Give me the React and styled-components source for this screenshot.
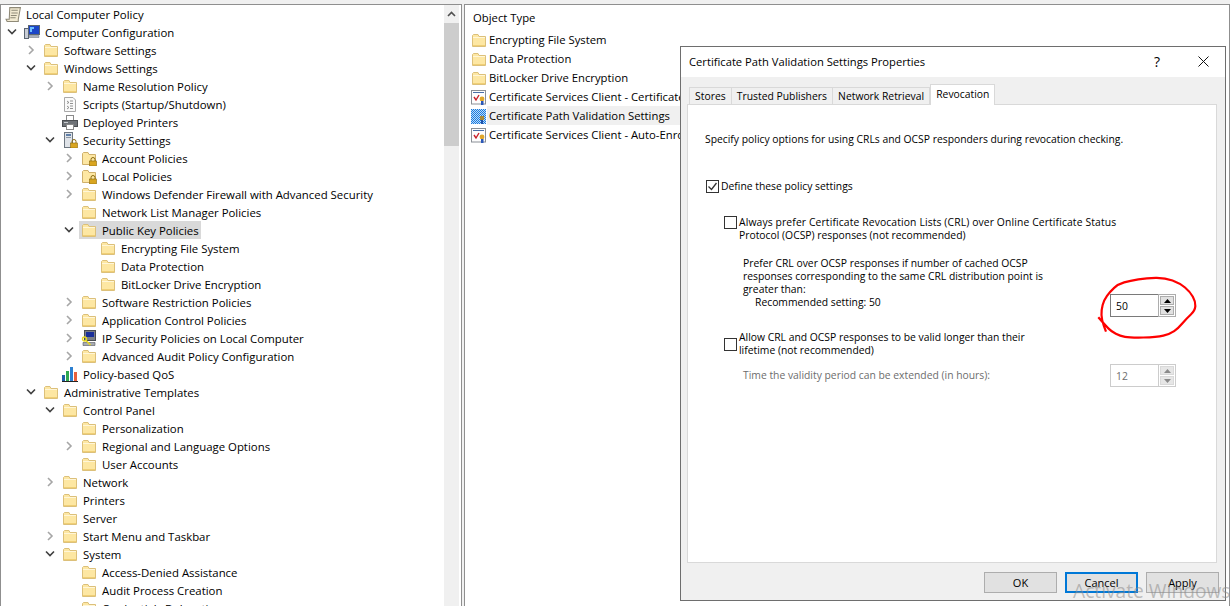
import React from 'react';
import styled, { createGlobalStyle } from 'styled-components';

const GlobalStyle = createGlobalStyle`
  html, body {
    margin: 0;
    padding: 0;
    background: #fff;
  }
  body {
    font-family: "Open Sans", "Noto Sans", "Liberation Sans", sans-serif;
    font-size: 11.3px;
    color: #000;
  }
`;

const Screen = styled.div`
  position: relative;
  width: 1230px;
  height: 606px;
  overflow: hidden;
  background: #f0f0f0;
  padding-top: 4px;
  box-sizing: border-box;
  display: flex;
  gap: 2px;
`;

const TreePane = styled.div`
  width: 462px;
  flex: none;
  box-sizing: border-box;
  height: 610px;
  display: flex;
  background: #fff;
  border: 1px solid #8f8f8f;
`;

const Tree = styled.div`
  flex: 1;
  overflow: hidden;
  font-size: 11.4px;
`;

const TreeRow = styled.div`
  height: 18px;
  display: flex;
  align-items: center;
  padding-left: ${(p) => (p.$level === 0 ? 2 : 3 + (p.$level - 1) * 19)}px;
`;

const ArrowSlot = styled.span`
  width: 16px;
  height: 18px;
  flex: none;
  display: flex;
  align-items: center;
  justify-content: center;
`;

const TreeItem = styled.span`
  display: flex;
  align-items: center;
  height: 18px;
  gap: ${(p) => (p.$bare ? 4 : 5)}px;
  padding: 0 2px;
  margin-left: ${(p) => (p.$bare ? 0 : 2)}px;
  white-space: nowrap;
  background: ${(p) => (p.$selected ? '#d9d9d9' : 'transparent')};
`;

const Scrollbar = styled.div`
  width: 15px;
  flex: none;
  margin-right: 2px;
  display: flex;
  flex-direction: column;
  background: #f0f0f0;
`;

const ScrollUp = styled.div`
  height: 18px;
  display: flex;
  align-items: center;
  justify-content: center;
`;

const ScrollThumb = styled.div`
  height: 123px;
  background: #cdcdcd;
`;

const ListPane = styled.div`
  flex: 1;
  height: 610px;
  box-sizing: border-box;
  background: #fff;
  border: 1px solid #8f8f8f;
  padding-left: 6px;
`;

const ListHeader = styled.div`
  height: 25px;
  padding-left: 2px;
  display: flex;
  align-items: center;
`;

const ListRow = styled.div`
  height: 19px;
  display: flex;
  align-items: center;
`;

const ListLabel = styled.span`
  height: 19px;
  width: 193px;
  display: flex;
  align-items: center;
  padding-left: 2px;
  white-space: nowrap;
  background: ${(p) => (p.$selected ? '#f0f0f0' : 'transparent')};
`;

const Dialog = styled.div`
  position: absolute;
  left: 680px;
  top: 46px;
  width: 546px;
  height: 555px;
  box-sizing: border-box;
  background: #f0f0f0;
  border: 1px solid #6e6e6e;
  display: flex;
  flex-direction: column;
`;

const TitleBar = styled.div`
  height: 30px;
  flex: none;
  box-sizing: border-box;
  display: flex;
  align-items: center;
  background: #fff;
  padding: 0 0 2px 8px;
  font-size: 11.2px;
`;

const TitleText = styled.span`
  flex: 1;
`;

const HelpButton = styled.span`
  width: 48px;
  text-align: center;
  font-size: 14px;
`;

const CloseButton = styled.span`
  width: 44px;
  display: flex;
  justify-content: center;
`;

const DialogBody = styled.div`
  flex: 1;
  padding: 7px 8px 0 6px;
  display: flex;
  flex-direction: column;
  font-size: 10.35px;
`;

const TabStrip = styled.div`
  height: 21px;
  display: flex;
  align-items: flex-end;
  padding-left: 2px;
  position: relative;
  z-index: 1;
  margin-bottom: -1px;
`;

const Tab = styled.div`
  height: ${(p) => (p.$active ? 21 : 18)}px;
  box-sizing: border-box;
  padding: 0 5.1px ${(p) => (p.$active ? 2 : 0)}px;
  display: flex;
  align-items: center;
  background: ${(p) => (p.$active ? '#fff' : '#f0f0f0')};
  border: 1px solid #d9d9d9;
  border-bottom: ${(p) => (p.$active ? 'none' : '1px solid #d9d9d9')};
  border-left-width: ${(p) => (p.$first || p.$active ? 1 : 0)}px;
`;

const TabPanel = styled.div`
  height: 459px;
  box-sizing: border-box;
  background: #fff;
  border: 1px solid #d9d9d9;
  padding: 28px 40px 0 17px;
`;

const Line = styled.div`
  line-height: 13px;
  white-space: nowrap;
  letter-spacing: ${(p) => p.$spacing || 0}px;
`;

const CheckRow = styled.div`
  display: flex;
  align-items: ${(p) => (p.$center ? 'center' : 'flex-start')};
  gap: 2px;
  margin-top: ${(p) => p.$top}px;
  margin-left: ${(p) => p.$left}px;
`;

const CheckBox = styled.span`
  width: 13px;
  height: 13px;
  box-sizing: border-box;
  flex: none;
  background: #fff;
  border: 1px solid #333;
  display: flex;
  align-items: center;
  justify-content: center;
`;

const PreferRow = styled.div`
  margin-top: 15px;
  margin-left: 38px;
  display: flex;
  justify-content: space-between;
  align-items: flex-start;
`;

const Recommended = styled(Line)`
  padding-left: 12px;
`;

const Spinner = styled.div`
  width: 66px;
  height: 23px;
  flex: none;
  display: flex;
  box-sizing: border-box;
  margin-top: ${(p) => p.$top}px;
  color: ${(p) => (p.$disabled ? '#6d6d6d' : '#000')};
`;

const SpinInput = styled.div`
  width: 48px;
  box-sizing: border-box;
  border: 1px solid ${(p) => (p.$disabled ? '#cccccc' : '#7a7a7a')};
  border-right: none;
  padding-left: 5px;
  display: flex;
  align-items: center;
`;

const SpinButtons = styled.div`
  width: 18px;
  box-sizing: border-box;
  border: 1px solid ${(p) => (p.$disabled ? '#cccccc' : '#adadad')};
  display: flex;
  flex-direction: column;
  justify-content: center;
  gap: 1px;
  padding: 1px;
  background: #fff;
`;

const SpinButton = styled.div`
  flex: 1;
  background: ${(p) => (p.$disabled ? '#e6e6e6' : '#e1e1e1')};
  border: 1px solid ${(p) => (p.$disabled ? '#d9d9d9' : '#adadad')};
  display: flex;
  align-items: center;
  justify-content: center;
`;

const TimeRow = styled.div`
  margin-top: 7px;
  margin-left: 38px;
  display: flex;
  justify-content: space-between;
  align-items: center;
  color: #6d6d6d;
`;

const Footer = styled.div`
  display: flex;
  justify-content: flex-end;
  gap: 8px;
  padding-top: 9px;
  margin-right: -2px;
  font-size: 11px;
`;

const DialogButton = styled.div`
  width: 73px;
  height: 21px;
  box-sizing: border-box;
  background: #e1e1e1;
  border: ${(p) => (p.$primary ? '2px solid #0078d7' : '1px solid #adadad')};
  display: flex;
  align-items: center;
  justify-content: center;
`;

const Watermark = styled.div`
  position: absolute;
  left: 1073px;
  top: 577px;
  font-size: 19.2px;
  line-height: 27px;
  white-space: nowrap;
  color: rgba(140, 140, 140, 0.55);
`;

const Scribble = styled.svg`
  position: absolute;
  left: 1090px;
  top: 270px;
  pointer-events: none;
`;

const Folder = () => (
  <svg width="16" height="16" viewBox="0 0 16 16">
    <path d="M1.5 3.5V14.5H14.5V4.5H8L7 2.5H2.5Z" fill="#fde7a3" stroke="#dcc07a" />
    <path d="M2 5.5H14" stroke="#fff6d8" />
    <path d="M2 13.5H14" stroke="#f0cf75" />
  </svg>
);

const Lock = () => (
  <g>
    <path d="M10 11V9.5a2 2 0 0 1 4 0V11" fill="none" stroke="#8a6a10" />
    <rect x="8.5" y="11" width="7" height="5" fill="#d9a520" stroke="#8a6a10" strokeWidth="0.6" />
  </g>
);

const LockFolder = () => (
  <svg width="16" height="16" viewBox="0 0 16 16">
    <path d="M1.5 3.5V14.5H14.5V4.5H8L7 2.5H2.5Z" fill="#fde7a3" stroke="#cfb06c" />
    <Lock />
  </svg>
);

const ScrollIcon = () => (
  <svg width="17" height="17" viewBox="0 0 16 16">
    <path d="M4.5 1.5H14.5L12.5 12.5V14.5H2L1 12.5H4Z" fill="#f2ead2" stroke="#8f8a78" />
    <path d="M6 4H12M6 6.5H12M5.5 9H11M5 11H10" stroke="#8f8a78" />
  </svg>
);

const ComputerIcon = () => (
  <svg width="16" height="16" viewBox="0 0 16 16">
    <rect x="0.5" y="4.5" width="4" height="10" fill="#c8cdd6" stroke="#5b6572" />
    <rect x="4.5" y="1.5" width="11" height="9" fill="#1a45c8" stroke="#5b6572" />
    <path d="M6 3H10V5H8V8H6Z" fill="#6ec0ff" />
    <path d="M5 11.5H15V13.5H5Z" fill="#aab2bd" stroke="#66707d" strokeWidth="0.5" />
  </svg>
);

const ScriptIcon = () => (
  <svg width="16" height="16" viewBox="0 0 16 16">
    <path d="M2.5 1.5H11L13.5 4V15.5H2.5Z" fill="#fafafa" stroke="#a9a9a9" />
    <path d="M5 5L7 6.5 5 7.5M8 5H11M8 7.5H11M5 10L7 11.5 5 13M8 10H11M8 12.5H11" fill="none" stroke="#777" strokeWidth="0.8" />
  </svg>
);

const PrinterIcon = () => (
  <svg width="16" height="16" viewBox="0 0 16 16">
    <rect x="4.5" y="1.5" width="7" height="5" fill="#fff" stroke="#8a8a8a" />
    <rect x="0.5" y="6.5" width="15" height="6" fill="#6f7378" stroke="#4b4e52" />
    <rect x="4.5" y="10.5" width="7" height="5" fill="#fff" stroke="#8a8a8a" />
    <path d="M2 8.5H6" stroke="#c9ccd0" />
  </svg>
);

const SecurityIcon = () => (
  <svg width="16" height="16" viewBox="0 0 16 16">
    <rect x="2.5" y="0.5" width="8" height="15" fill="#dfe3e8" stroke="#6d7680" />
    <rect x="4" y="2" width="5" height="2" fill="#5f7fa8" />
    <rect x="4" y="5" width="5" height="1" fill="#8c96a2" />
    <Lock />
  </svg>
);

const IpSecurityIcon = () => (
  <svg width="16" height="16" viewBox="0 0 16 16">
    <rect x="3.5" y="0.5" width="11" height="10" fill="#7b8087" stroke="#4a4d52" />
    <rect x="5" y="2" width="8" height="5" fill="#1a2f9a" />
    <path d="M2 12.5H14V15.5H2Z" fill="#a8acb2" stroke="#55585d" strokeWidth="0.6" />
    <circle cx="3.5" cy="9" r="2" fill="none" stroke="#e8d820" strokeWidth="1.4" />
    <path d="M5 10.5L9.5 15" stroke="#e8d820" strokeWidth="1.6" />
  </svg>
);

const QosIcon = () => (
  <svg width="16" height="16" viewBox="0 0 16 16">
    <rect x="0" y="9" width="3" height="7" fill="#1f5fa8" />
    <rect x="4" y="5" width="3" height="11" fill="#2fa84f" />
    <rect x="8" y="1" width="3" height="15" fill="#2c7fd0" />
    <rect x="12" y="6" width="3" height="10" fill="#e8603c" />
    <path d="M0 15.5H16" stroke="#222" />
  </svg>
);

const CertIcon = () => (
  <svg width="16" height="16" viewBox="0 0 16 16">
    <rect x="0.5" y="1.5" width="14" height="13.5" fill="#fdfdfd" stroke="#8a8f96" />
    <path d="M2 3.5H13" stroke="#4a6fa8" />
    <path d="M3 8L5 11 8 6" fill="none" stroke="#c8202a" strokeWidth="1.4" />
    <circle cx="11" cy="10" r="2.4" fill="#e0a72a" />
    <path d="M10 12H12.5V16H10Z" fill="#2a57b8" />
  </svg>
);

// selected row: the icon is dithered with the highlight blue
const CertSelectedIcon = () => (
  <svg width="16" height="16" viewBox="0 0 16 16" shapeRendering="crispEdges">
    <defs>
      <pattern id="dither" width="2" height="2" patternUnits="userSpaceOnUse">
        <rect width="2" height="2" fill="#1b7be0" />
        <rect width="1" height="1" fill="#bcdcf8" />
        <rect x="1" y="1" width="1" height="1" fill="#bcdcf8" />
      </pattern>
    </defs>
    <rect x="0" y="1" width="15" height="15" fill="url(#dither)" />
    <rect x="9" y="8" width="4" height="4" fill="#a88a3a" />
    <rect x="10" y="12" width="2" height="4" fill="#1f4fa8" />
  </svg>
);

const icons = {
  folder: Folder,
  lock: LockFolder,
  scroll: ScrollIcon,
  computer: ComputerIcon,
  script: ScriptIcon,
  printer: PrinterIcon,
  security: SecurityIcon,
  ipsec: IpSecurityIcon,
  qos: QosIcon,
  cert: CertIcon,
  certSelected: CertSelectedIcon,
};

const Chevron = ({ open }) =>
  open ? (
    <svg width="10" height="8" viewBox="0 0 10 8">
      <path d="M1 1.5L5 5.5 9 1.5" fill="none" stroke="#404040" strokeWidth="1.6" />
    </svg>
  ) : (
    <svg width="8" height="10" viewBox="0 0 8 10">
      <path d="M2 1L6 5 2 9" fill="none" stroke="#a6a6a6" strokeWidth="1.6" />
    </svg>
  );

const Triangle = ({ down, color }) => (
  <svg width="7" height="4" viewBox="0 0 7 4">
    <path d={down ? 'M0 0H7L3.5 4Z' : 'M0 4H7L3.5 0Z'} fill={color} />
  </svg>
);

// level, arrow ('open', 'closed' or null), icon, text
const treeRows = [
  [0, null, 'scroll', 'Local Computer Policy'],
  [1, 'open', 'computer', 'Computer Configuration'],
  [2, 'closed', 'folder', 'Software Settings'],
  [2, 'open', 'folder', 'Windows Settings'],
  [3, 'closed', 'folder', 'Name Resolution Policy'],
  [3, null, 'script', 'Scripts (Startup/Shutdown)'],
  [3, null, 'printer', 'Deployed Printers'],
  [3, 'open', 'security', 'Security Settings'],
  [4, 'closed', 'lock', 'Account Policies'],
  [4, 'closed', 'lock', 'Local Policies'],
  [4, 'closed', 'folder', 'Windows Defender Firewall with Advanced Security'],
  [4, null, 'folder', 'Network List Manager Policies'],
  [4, 'open', 'folder', 'Public Key Policies', true],
  [5, null, 'folder', 'Encrypting File System'],
  [5, null, 'folder', 'Data Protection'],
  [5, null, 'folder', 'BitLocker Drive Encryption'],
  [4, 'closed', 'folder', 'Software Restriction Policies'],
  [4, 'closed', 'folder', 'Application Control Policies'],
  [4, 'closed', 'ipsec', 'IP Security Policies on Local Computer'],
  [4, 'closed', 'folder', 'Advanced Audit Policy Configuration'],
  [3, null, 'qos', 'Policy-based QoS'],
  [2, 'open', 'folder', 'Administrative Templates'],
  [3, 'open', 'folder', 'Control Panel'],
  [4, null, 'folder', 'Personalization'],
  [4, 'closed', 'folder', 'Regional and Language Options'],
  [4, null, 'folder', 'User Accounts'],
  [3, 'closed', 'folder', 'Network'],
  [3, null, 'folder', 'Printers'],
  [3, null, 'folder', 'Server'],
  [3, 'closed', 'folder', 'Start Menu and Taskbar'],
  [3, 'open', 'folder', 'System'],
  [4, null, 'folder', 'Access-Denied Assistance'],
  [4, null, 'folder', 'Audit Process Creation'],
  [4, null, 'folder', 'Credentials Delegation'],
];

const listRows = [
  ['folder', 'Encrypting File System'],
  ['folder', 'Data Protection'],
  ['folder', 'BitLocker Drive Encryption'],
  ['cert', 'Certificate Services Client - Certificate Enrollment Policy'],
  ['certSelected', 'Certificate Path Validation Settings'],
  ['cert', 'Certificate Services Client - Auto-Enrollment'],
];

const tabs = ['Stores', 'Trusted Publishers', 'Network Retrieval', 'Revocation'];

// hand-drawn ring round the spinner
const ringPoints = [
  [8.3, 47.3], [15, 55], [21.7, 61.7], [30, 66], [40, 67.7], [66.7, 67.3], [80, 64],
  [88.3, 58.3], [96.7, 48.3], [105, 40.7], [105.7, 31.7], [100, 21.7], [90, 13.3],
  [75, 7.7], [56.7, 8], [40, 10.7], [28.3, 14], [20, 21.7], [14, 30], [11.3, 40],
  [11.7, 50], [16, 61.7],
];

const smoothPath = (pts) => {
  let d = `M${pts[0][0]} ${pts[0][1]}`;
  for (let i = 1; i < pts.length - 1; i++) {
    const mx = (pts[i][0] + pts[i + 1][0]) / 2;
    const my = (pts[i][1] + pts[i + 1][1]) / 2;
    d += `Q${pts[i][0]} ${pts[i][1]} ${mx} ${my}`;
  }
  const last = pts[pts.length - 1];
  return `${d}L${last[0]} ${last[1]}`;
};

const SpinBox = ({ value, top, disabled }) => {
  const color = disabled ? '#8a8a8a' : '#000';
  return (
    <Spinner $top={top} $disabled={disabled}>
      <SpinInput $disabled={disabled}>{value}</SpinInput>
      <SpinButtons $disabled={disabled}>
        <SpinButton $disabled={disabled}><Triangle color={color} /></SpinButton>
        <SpinButton $disabled={disabled}><Triangle down color={color} /></SpinButton>
      </SpinButtons>
    </Spinner>
  );
};

const App = () => (
  <Screen>
    <GlobalStyle />
    <TreePane>
      <Tree>
        {treeRows.map(([level, arrow, icon, text, selected]) => {
          const Icon = icons[icon];
          return (
            <TreeRow key={text + level} $level={level}>
              {level > 0 && (
                <ArrowSlot>{arrow && <Chevron open={arrow === 'open'} />}</ArrowSlot>
              )}
              <TreeItem $selected={selected} $bare={level === 0}>
                <Icon />
                {text}
              </TreeItem>
            </TreeRow>
          );
        })}
      </Tree>
      <Scrollbar>
        <ScrollUp>
          <svg width="9" height="6" viewBox="0 0 9 6">
            <path d="M1 5L4.5 1.5 8 5" fill="none" stroke="#505050" strokeWidth="1.6" />
          </svg>
        </ScrollUp>
        <ScrollThumb />
      </Scrollbar>
    </TreePane>

    <ListPane>
      <ListHeader>Object Type</ListHeader>
      {listRows.map(([kind, text]) => {
        const Icon = icons[kind];
        return (
          <ListRow key={text}>
            <Icon />
            <ListLabel $selected={kind === 'certSelected'}>{text}</ListLabel>
          </ListRow>
        );
      })}
    </ListPane>

    <Dialog>
      <TitleBar>
        <TitleText>Certificate Path Validation Settings Properties</TitleText>
        <HelpButton>?</HelpButton>
        <CloseButton>
          <svg width="11" height="11" viewBox="0 0 11 11">
            <path d="M0.5 0.5L10.5 10.5M10.5 0.5L0.5 10.5" stroke="#111" />
          </svg>
        </CloseButton>
      </TitleBar>
      <DialogBody>
        <TabStrip>
          {tabs.map((tab, i) => (
            <Tab key={tab} $first={i === 0} $active={tab === 'Revocation'}>{tab}</Tab>
          ))}
        </TabStrip>
        <TabPanel>
          <Line>Specify policy options for using CRLs and OCSP responders during revocation checking.</Line>

          <CheckRow $top={34} $left={1} $center>
            <CheckBox>
              <svg width="11" height="11" viewBox="0 0 11 11">
                <path d="M1.5 5.5L4.5 8.5 9.5 2" fill="none" stroke="#333" strokeWidth="1.3" />
              </svg>
            </CheckBox>
            <Line>Define these policy settings</Line>
          </CheckRow>

          <CheckRow $top={23} $left={19}>
            <CheckBox />
            <div>
              <Line $spacing={0.12}>Always prefer Certificate Revocation Lists (CRL) over Online Certificate Status</Line>
              <Line>Protocol (OCSP) responses (not recommended)</Line>
            </div>
          </CheckRow>

          <PreferRow>
            <div>
              <Line>Prefer CRL over OCSP responses if number of cached OCSP</Line>
              <Line>responses corresponding to the same CRL distribution point is</Line>
              <Line>greater than:</Line>
              <Recommended>Recommended setting: 50</Recommended>
            </div>
            <SpinBox value="50" top={37} />
          </PreferRow>

          <CheckRow $top={14} $left={19} $center>
            <CheckBox />
            <div>
              <Line>Allow CRL and OCSP responses to be valid longer than their</Line>
              <Line>lifetime (not recommended)</Line>
            </div>
          </CheckRow>

          <TimeRow>
            <Line>Time the validity period can be extended (in hours):</Line>
            <SpinBox value="12" top={0} disabled />
          </TimeRow>
        </TabPanel>
        <Footer>
          <DialogButton>OK</DialogButton>
          <DialogButton $primary>Cancel</DialogButton>
          <DialogButton>Apply</DialogButton>
        </Footer>
      </DialogBody>
    </Dialog>

    <Scribble width="115" height="80" viewBox="0 0 115 80">
      <path d={smoothPath(ringPoints)} fill="none" stroke="#fe0000" strokeWidth="2.2" strokeLinejoin="round" />
    </Scribble>

    <Watermark>Activate Windows</Watermark>
  </Screen>
);

export default App;
